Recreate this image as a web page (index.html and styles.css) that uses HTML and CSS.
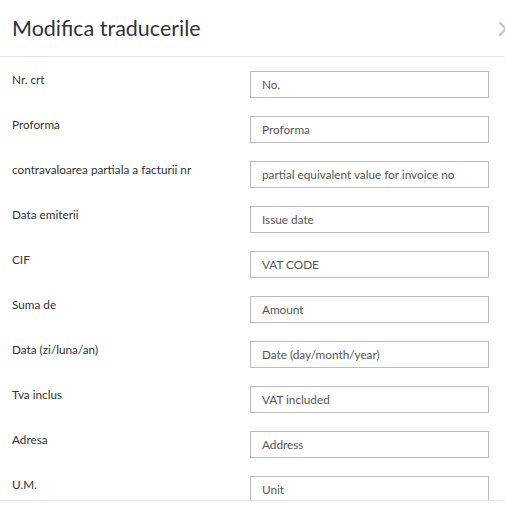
FILE: index.html
```html
<!DOCTYPE html>
<html lang="ro">

<head>
  <meta charset="UTF-8" />
  <title>Modifica traducerile</title>
  <link rel="stylesheet" href="styles.css">
</head>

<body>
  <div class="modal">
    <div class="modal-header">
      <h4 class="modal-title">Modifica traducerile</h4>
      <span class="close">&times;</span>
    </div>

    <div class="modal-body">
      <div class="row">
        <label>Nr. crt</label>
        <input type="text" value="No." />
      </div>
      <div class="row">
        <label>Proforma</label>
        <input type="text" value="Proforma" />
      </div>
      <div class="row">
        <label>contravaloarea partiala a facturii nr</label>
        <input type="text" value="partial equivalent value for invoice no" />
      </div>
      <div class="row">
        <label>Data emiterii</label>
        <input type="text" value="Issue date" />
      </div>
      <div class="row">
        <label>CIF</label>
        <input type="text" value="VAT CODE" />
      </div>
      <div class="row">
        <label>Suma de</label>
        <input type="text" value="Amount" />
      </div>
      <div class="row">
        <label>Data (zi/luna/an)</label>
        <input type="text" value="Date (day/month/year)" />
      </div>
      <div class="row">
        <label>Tva inclus</label>
        <input type="text" value="VAT included" />
      </div>
      <div class="row">
        <label>Adresa</label>
        <input type="text" value="Address" />
      </div>
      <div class="row">
        <label>U.M.</label>
        <input type="text" value="Unit" />
      </div>
    </div>

    <div class="modal-footer"></div>
  </div>
</body>

</html>
```

FILE: styles.css
```css
body {
  margin: 0;
  padding: 0;
  background-color: #fff;
  font-family: Lato, 'Open Sans', sans-serif;
  color: #333;
  overflow: hidden;
}

.modal {
  width: 505px;
  height: 508px;
  display: flex;
  flex-direction: column;
  overflow: hidden;
}

.modal-header {
  display: flex;
  align-items: center;
  justify-content: space-between;
  padding: 15px 0 15px 12px;
  border-bottom: 1px solid #e5e5e5;
  flex-shrink: 0;
}

.modal-title {
  margin: 0;
  font-size: 21.5px;
  font-weight: 400;
  line-height: 26px;
  color: #333;
}

.close {
  font-size: 32px;
  line-height: 26px;
  color: #c4c4c4;
  margin-right: -10px;
  font-family: Lato, sans-serif;
}

.modal-body {
  height: 443px;
  overflow: hidden;
  padding: 14px 0 0 12px;
  box-sizing: border-box;
  flex-shrink: 0;
}

.row {
  display: flex;
  align-items: flex-start;
  margin-bottom: 18px;
}

.row label {
  width: 238px;
  font-size: 11.75px;
  line-height: 17px;
  color: #333;
}

.row input {
  width: 239px;
  height: 27px;
  box-sizing: border-box;
  border: 1px solid #bbb;
  padding: 0 11px;
  font-family: Lato, sans-serif;
  font-size: 11.75px;
  color: #555;
  background: #fff;
  outline: none;
  margin: 0;
}

.modal-footer {
  border-top: 1px solid #e5e5e5;
  flex: 1;
}
```
